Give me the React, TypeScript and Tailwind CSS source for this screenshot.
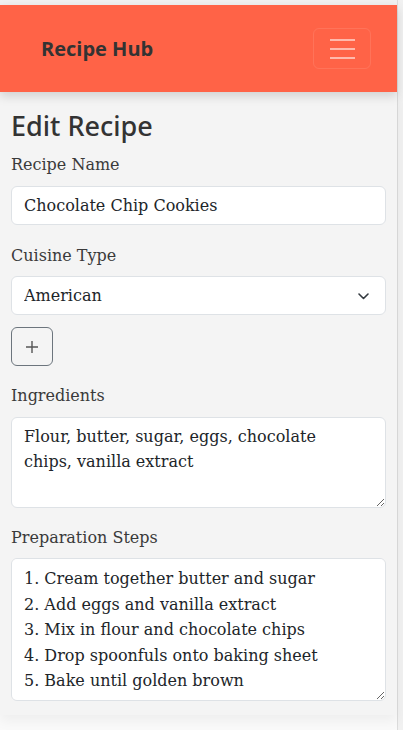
import { useState } from 'react';

const serif = "font-['DejaVu_Serif','Liberation_Serif',serif]";

const App = () => {
  const [name, setName] = useState('Chocolate Chip Cookies');
  const [cuisine, setCuisine] = useState('American');
  const [ingredients, setIngredients] = useState('Flour, butter, sugar, eggs, chocolate chips, vanilla extract');
  const [steps, setSteps] = useState(
    '1. Cream together butter and sugar\n2. Add eggs and vanilla extract\n3. Mix in flour and chocolate chips\n4. Drop spoonfuls onto baking sheet\n5. Bake until golden brown'
  );

  return (
    <div className="min-h-screen flex bg-[#f1f1f1]">
      <div className="w-[397px] flex flex-col pt-[5px]">
        {/* Navbar */}
        <nav className="relative z-10 h-[87px] shrink-0 bg-[#ff6347] flex items-center justify-between pl-[41px] pr-[26px] shadow-[0_4px_10px_rgba(0,0,0,0.15)]">
          <span className="font-['Open_Sans',sans-serif] font-bold text-[20px] text-[#333]">Recipe Hub</span>
          <button className="w-[58px] h-[41px] rounded-[6px] border border-white/10 flex flex-col items-center justify-center gap-[7px]">
            <span className="block w-[25px] h-[2px] bg-white/55" />
            <span className="block w-[25px] h-[2px] bg-white/55" />
            <span className="block w-[25px] h-[2px] bg-white/55" />
          </button>
        </nav>

        {/* Form */}
        <main className={`relative bg-[#f4f4f4] px-[11px] pt-[18px] pb-[14px] shadow-[0_6px_12px_rgba(0,0,0,0.05)] ${serif}`}>
          <h2 className="font-['Noto_Sans',sans-serif] font-medium text-[27px] leading-[32px] text-[#333] mb-[10px]">Edit Recipe</h2>

          <div className="mb-[18px]">
            <label className="block text-[16px] leading-[25.5px] text-[#3a3a3a] mb-[8px]">Recipe Name</label>
            <input
              value={name}
              onChange={(e) => setName(e.target.value)}
              className="block w-full h-[39px] px-[12px] text-[16px] leading-[25.5px] text-[#212529] bg-white border border-[#dee2e6] rounded-[6px] outline-none"
            />
          </div>

          <div className="mb-[12px]">
            <label className="block text-[16px] leading-[25.5px] text-[#3a3a3a] mb-[8px]">Cuisine Type</label>
            <div className="relative">
              <select
                value={cuisine}
                onChange={(e) => setCuisine(e.target.value)}
                className="block w-full h-[39px] px-[12px] text-[16px] text-[#212529] bg-white border border-[#dee2e6] rounded-[6px] appearance-none outline-none"
              >
                <option>American</option>
                <option>Italian</option>
                <option>Mexican</option>
              </select>
              <svg className="absolute right-[17px] top-[17px] pointer-events-none" width="11" height="7" viewBox="0 0 11 7" fill="none">
                <path d="M1 1l4.5 4.5L10 1" stroke="#343a40" strokeWidth="1.6" strokeLinecap="round" strokeLinejoin="round" />
              </svg>
            </div>
          </div>

          <button className="w-[42px] h-[39px] rounded-[6px] border border-[#6c757d] flex items-center justify-center mb-[17px]">
            <svg width="14" height="14" viewBox="0 0 14 14">
              <path d="M7 1v12M1 7h12" stroke="#555" strokeWidth="1.4" />
            </svg>
          </button>

          <div className="mb-[17px]">
            <label className="block text-[16px] leading-[25.5px] text-[#3a3a3a] mb-[8px]">Ingredients</label>
            <textarea
              value={ingredients}
              onChange={(e) => setIngredients(e.target.value)}
              className="block w-full h-[91px] pl-[12px] pr-[40px] py-[6px] text-[16px] leading-[25.5px] text-[#212529] bg-white border border-[#dee2e6] rounded-[6px] outline-none"
            />
          </div>

          <div>
            <label className="block text-[16px] leading-[25.5px] text-[#3a3a3a] mb-[8px]">Preparation Steps</label>
            <textarea
              value={steps}
              onChange={(e) => setSteps(e.target.value)}
              className="block w-full h-[143px] px-[12px] py-[7px] text-[16px] leading-[25.5px] text-[#212529] bg-white border border-[#dee2e6] rounded-[6px] outline-none"
            />
          </div>
        </main>

        {/* Footer area */}
        <footer className="flex-1 bg-[#fafafa]" />
      </div>
      <div className="flex-1 border-l border-[#dcdcdc] bg-[#f1f1f1]" />
    </div>
  );
};

export default App;
